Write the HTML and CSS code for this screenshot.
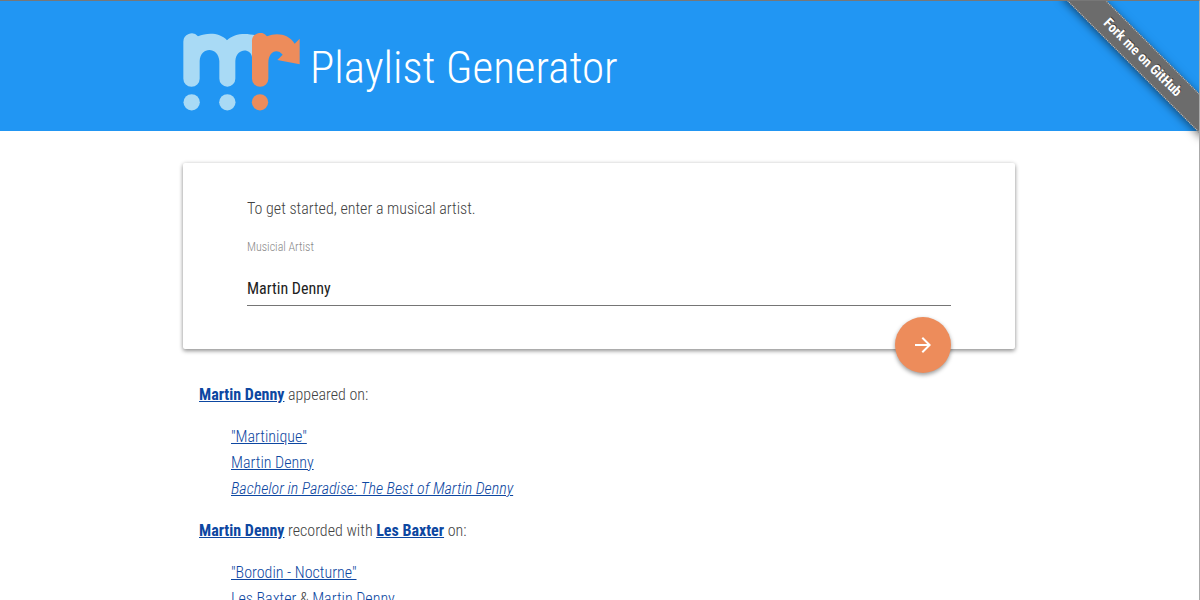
FILE: index.html
```html
<!DOCTYPE html>
<html lang="en">
<head>
<meta charset="utf-8">
<title>Playlist Generator</title>
<link rel="stylesheet" href="styles.css">
</head>
<body>
<header class="header">
  <div class="container brand">
    <svg class="logo" viewBox="38 38 351 234" aria-hidden="true">
      <g fill="#a9daf5">
        <path d="M39 65a25 25 0 0 1 44-17C110 37 148 36 170 60C190 39 225 37 256 45V110H245C241 82 198 82 195 122V175a24 24 0 0 1-48 0V122C144 78 90 78 88 122V175a24 24 0 0 1-49 0Z"/>
        <circle cx="64" cy="246" r="24.500"/>
        <circle cx="171" cy="246" r="24.500"/>
      </g>
      <g fill="#ed8c5b">
        <path d="M245 65a25 25 0 0 1 45-17C320 35 356 42 373 70L388 55V132L321 119L337 103C321 83 294 92 294 128V175a24 24 0 0 1-49 0Z"/>
        <circle cx="269" cy="246" r="24.500"/>
      </g>
    </svg>
    <h1 class="title">Playlist Generator</h1>
  </div>
  <div class="ribbon-corner"><a class="ribbon" href="#">Fork me on GitHub</a></div>
</header>
<main class="main">
  <div class="container">
    <form class="card">
      <p class="intro">To get started, enter a musical artist.</p>
      <label class="label" for="artist">Musicial Artist</label>
      <input class="field" id="artist" type="text" value="Martin Denny">
      <button class="go" type="button" aria-label="Go">
        <svg class="go-icon" viewBox="0 0 24 24" aria-hidden="true"><path fill="#fff" d="M12 4l-1.410 1.410L16.170 11H4v2h12.170l-5.580 5.590L12 20l8-8z"/></svg>
      </button>
    </form>
    <section class="results">
      <p class="step"><a class="name" href="#">Martin Denny</a> appeared on:</p>
      <ul class="track">
        <li><a href="#">"Martinique"</a></li>
        <li><a href="#">Martin Denny</a></li>
        <li><a href="#"><em>Bachelor in Paradise: The Best of Martin Denny</em></a></li>
      </ul>
      <p class="step"><a class="name" href="#">Martin Denny</a> recorded with <a class="name" href="#">Les Baxter</a> on:</p>
      <ul class="track">
        <li><a href="#">"Borodin - Nocturne"</a></li>
        <li><a href="#">Les Baxter</a> &amp; <a href="#">Martin Denny</a></li>
      </ul>
    </section>
  </div>
</main>
</body>
</html>
```
FILE: styles.css
```css
* { box-sizing: border-box; }
html { height: 100%; overflow: hidden; }
body {
  height: 100%;
  margin: 0;
  border-top: 1px solid #777;
  border-right: 1px solid #aaa;
  background: #fff;
  color: #424242;
  font-family: "Roboto Condensed", Roboto, sans-serif;
  font-size: 16px;
  font-weight: 300;
  line-height: 26px;
}
a { color: #0d47a1; }
.header { position: relative; padding-right: 1px; background: #2196f3; }
.main { padding-right: 1px; }
.container { max-width: 832px; margin: 0 auto; }
.brand { display: flex; align-items: flex-start; gap: 10px; padding: 32px 0 20px; }
.logo { flex: none; width: 117px; height: 78px; }
.title { margin: 0; color: #fff; font-size: 45px; font-weight: 300; line-height: 70px; }
.ribbon-corner {
  position: absolute;
  top: 0;
  right: 0;
  width: 150px;
  height: 150px;
  overflow: hidden;
}
.ribbon {
  position: absolute;
  top: 42px;
  right: -44px;
  width: 200px;
  border-top: 1px dotted #c4c4c4;
  border-bottom: 1px dotted #c4c4c4;
  background: #6c6c6c;
  box-shadow: 0 2px 8px rgba(0, 0, 0, 0.5);
  color: #fff;
  font-size: 14px;
  font-weight: 700;
  text-align: center;
  text-decoration: none;
  text-shadow: 0 -1px rgba(0, 0, 0, 0.5);
  transform: rotate(45deg);
}
.card {
  position: relative;
  margin-top: 32px;
  padding: 33px 64px 43px;
  border-radius: 2px;
  box-shadow: 0 2px 4px rgba(0, 0, 0, 0.4), 0 0 4px rgba(0, 0, 0, 0.1);
}
.intro { margin: 0 0 15px; }
.label { display: block; color: #888; font-size: 12px; line-height: 20px; }
.field {
  display: block;
  width: 100%;
  height: 32px;
  margin-top: 17px;
  padding: 0 0 2px;
  border: 0;
  border-bottom: 1px solid #757575;
  outline: 0;
  background: transparent;
  color: #212121;
  font-family: inherit;
  font-size: 16px;
  font-weight: 400;
}
.go {
  position: absolute;
  right: 64px;
  bottom: -24px;
  display: grid;
  place-items: center;
  width: 56px;
  height: 56px;
  padding: 0;
  border: 0;
  border-radius: 50%;
  background: #ed8c5b;
  box-shadow: 0 2px 4px rgba(0, 0, 0, 0.4);
}
.go-icon { width: 24px; height: 24px; }
.results { padding: 33px 16px; }
.step { margin: 0 0 16px; }
.name { font-weight: 700; }
.track { margin: 0 0 16px; padding: 0 0 0 32px; list-style: none; }
```
